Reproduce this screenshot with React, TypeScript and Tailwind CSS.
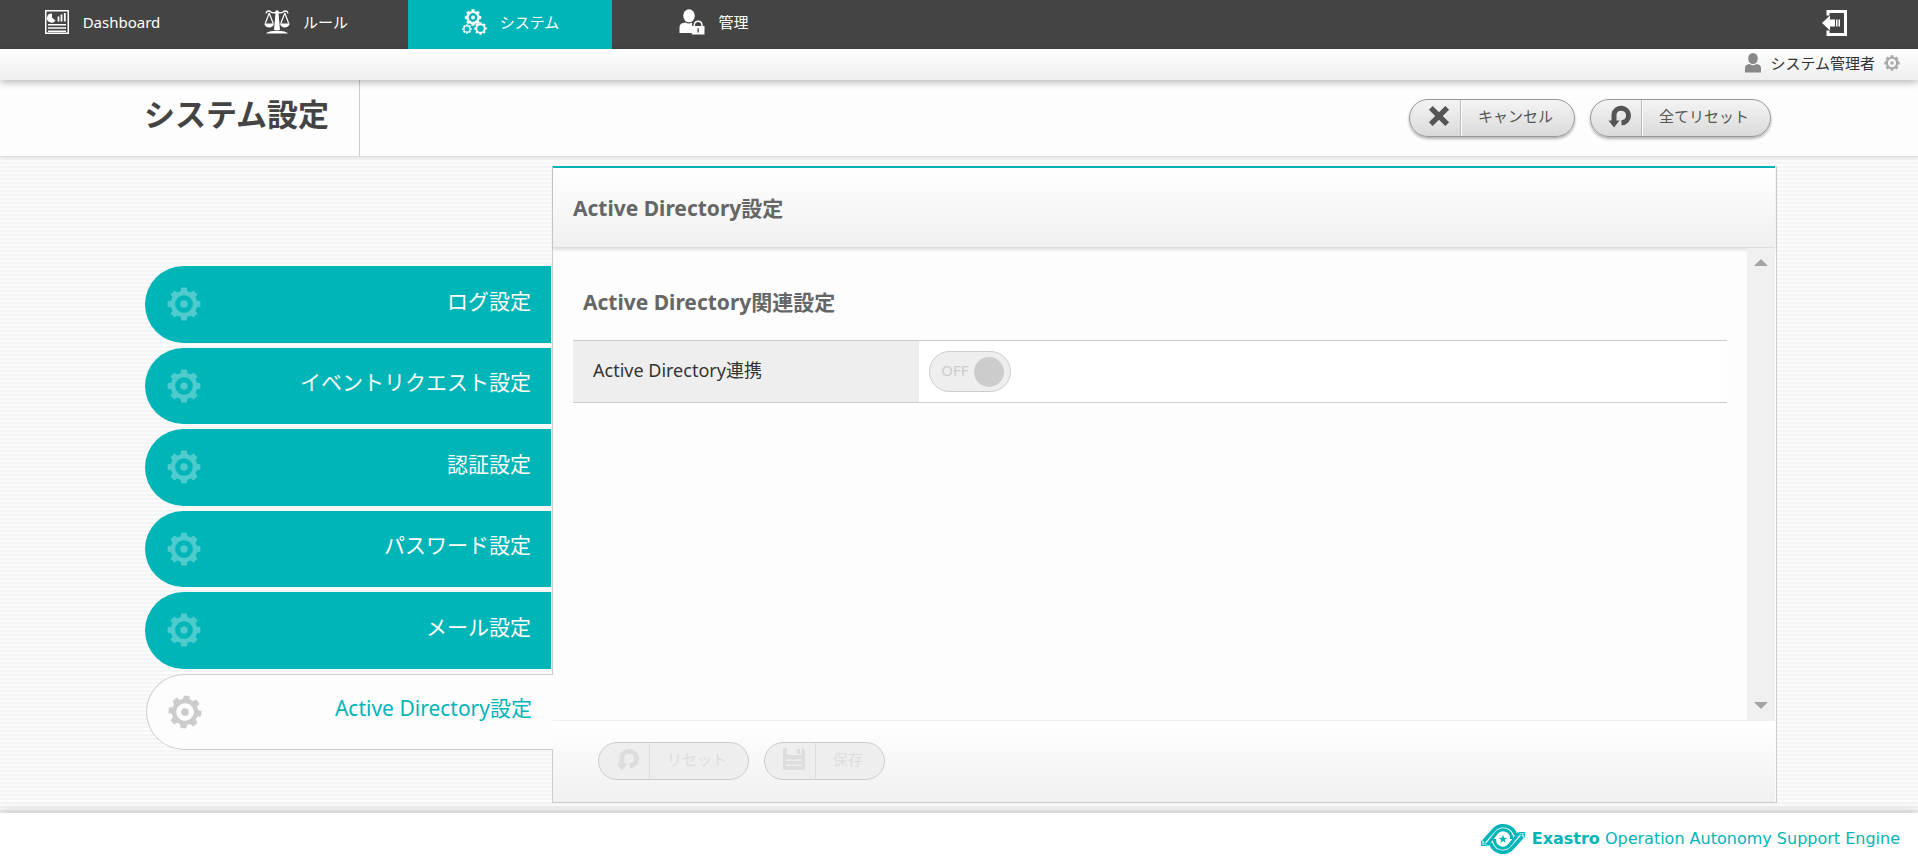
import type { ReactNode } from "react";

type IconProps = { className?: string };

const TEETH = [0, 45, 90, 135, 180, 225, 270, 315];

function GearShape({ cx, cy, s = 1, hole = true }: { cx: number; cy: number; s?: number; hole?: boolean }) {
  return (
    <g transform={`translate(${cx} ${cy}) scale(${s})`}>
      <circle r="11" fill="none" stroke="currentColor" strokeWidth="4.4" />
      {TEETH.map((a) => (
        <path key={a} d="M-3.6 -12 L-2.8 -16.4 H2.8 L3.6 -12 Z" transform={`rotate(${a})`} fill="currentColor" />
      ))}
      {hole && <circle r="3.8" fill="currentColor" />}
    </g>
  );
}

function GearIcon({ className }: IconProps) {
  return (
    <svg viewBox="-17 -17 34 34" className={className} aria-hidden="true">
      <GearShape cx={0} cy={0} />
    </svg>
  );
}

function DashboardIcon({ className }: IconProps) {
  return (
    <svg viewBox="0 0 26 26" className={className} aria-hidden="true" fill="none" stroke="currentColor">
      <rect x="1.75" y="1.75" width="22.5" height="22.5" strokeWidth="1.5" />
      <path d="M8 4.500V8.500L11.500 11.500A4.600 4.600 0 1 1 8 4.500Z" fill="currentColor" stroke="none" />
      <path d="M14.500 12.500V7.500M17.500 12.500V5.500M20.800 12.500V4" strokeWidth="1.8" />
      <path d="M4 15.750H22M4 19H22M4 22.250H22" strokeWidth="1.500" />
    </svg>
  );
}

function ScalesIcon({ className }: IconProps) {
  return (
    <svg viewBox="0 0 26 26" className={className} aria-hidden="true" fill="none" stroke="currentColor">
      <path d="M2 4.500C2.500 1.500 5.500 1.500 7 3C9 4.500 11 3.500 13 3.500S17 4.500 19 3C20.500 1.500 23.500 1.500 24 4.500" strokeWidth="1.400" />
      <circle cx="13" cy="3.200" r="2" fill="currentColor" stroke="none" />
      <path d="M5.200 4L1.300 14.500M5.200 4L9.200 14.500M20.800 4L16.800 14.500M20.800 4L24.700 14.500" strokeWidth="1.200" />
      <path d="M0.300 14.500H10C9.500 19.800 1 19.800 0.300 14.500ZM16 14.500H25.700C25 19.800 16.500 19.800 16 14.500Z" fill="currentColor" stroke="none" />
      <path d="M11.500 4H14.500L16 21H10Z" fill="currentColor" stroke="none" />
      <path d="M2 24.500C5 21.500 9 22.500 13 21.500C17 22.500 21 21.500 24 24.500Z" fill="currentColor" stroke="none" />
    </svg>
  );
}

function GearsIcon({ className }: IconProps) {
  return (
    <svg viewBox="0 0 26 26" className={className} aria-hidden="true">
      <GearShape cx={12} cy={8.500} s={0.500} />
      <GearShape cx={6} cy={20} s={0.290} hole={false} />
      <GearShape cx={19.500} cy={19.500} s={0.380} hole={false} />
    </svg>
  );
}

function UserLockIcon({ className }: IconProps) {
  return (
    <svg viewBox="0 0 26 26" className={className} aria-hidden="true">
      <ellipse cx="10" cy="6.800" rx="5.800" ry="6.500" fill="currentColor" />
      <path d="M0.500 24V19C0.500 15 3 13.800 6.500 13.500Q10 15.500 13 13.500L13.500 24Z" fill="currentColor" />
      <rect x="12.800" y="17" width="12.700" height="8.500" fill="currentColor" />
      <path d="M15.300 18V15.500A3.900 3.900 0 0 1 23 15.500V18" fill="none" stroke="currentColor" strokeWidth="1.500" />
      <path d="M19.200 19.300V23.500" stroke="#444" strokeWidth="1.300" />
    </svg>
  );
}

function LogoutIcon({ className }: IconProps) {
  return (
    <svg viewBox="0 0 26 28" className={className} aria-hidden="true">
      <path d="M6 6.500V2.500H23.500V25.500H6V21.500" fill="none" stroke="currentColor" strokeWidth="3" />
      <path d="M0 14L8 6.500V10.500H13V17.500H8V21.500ZM14 10.500H15.500V17.500H14ZM16.500 10.500H18V17.500H16.500Z" fill="currentColor" />
    </svg>
  );
}

function UserIcon({ className }: IconProps) {
  return (
    <svg viewBox="0 0 16 20" className={className} aria-hidden="true" fill="currentColor">
      <ellipse cx="8" cy="5.500" rx="4.800" ry="5.500" />
      <path d="M0 19.500V15Q0 11.500 4.500 11Q8 13.500 11.500 11Q16 11.500 16 15V19.500Z" />
    </svg>
  );
}

function CrossIcon({ className }: IconProps) {
  return (
    <svg viewBox="0 0 24 24" className={className} aria-hidden="true">
      <path d="M3.800 3.800L20.200 20.200M20.200 3.800L3.800 20.200" stroke="currentColor" strokeWidth="5.400" />
    </svg>
  );
}

function ResetIcon({ className }: IconProps) {
  return (
    <svg viewBox="0 0 24 24" className={className} aria-hidden="true">
      <path d="M6 18V10.500A7.300 7.300 0 1 1 13.500 18.800" fill="none" stroke="currentColor" strokeWidth="5" />
      <path d="M0.500 16.500H11.500L6 23.500Z" fill="currentColor" />
    </svg>
  );
}

function SaveIcon({ className }: IconProps) {
  return (
    <svg viewBox="0 0 24 24" className={className} aria-hidden="true">
      <path
        fillRule="evenodd"
        fill="currentColor"
        d="M1.500 1H5V8H19.500V1H21L23 3.500V21.500Q23 23 21.500 23H2.500Q1 23 1 21.500V2ZM4 12.500V14H11V12.500ZM12 12.500V14H20V12.500ZM4 17.500V19H20V17.500Z"
      />
      <path d="M15 2H18V7H15Z" fill="currentColor" />
    </svg>
  );
}

function LogoBand() {
  return (
    <g fill="none" stroke="currentColor">
      <path d="M2.500 17.500L12.500 6.300A12.800 12.800 0 0 1 34.500 11" strokeWidth="3.600" />
      <path d="M6 21L15 9.500A8.600 8.600 0 0 1 30.600 15" strokeWidth="3.200" />
      <path d="M0.700 16.500V21.300H6" strokeWidth="1.200" />
      <path d="M3.800 18V21.500M0.700 19.300H5.500" strokeWidth="0.800" />
    </g>
  );
}

function ExastroLogo({ className }: IconProps) {
  return (
    <svg viewBox="0 0 44 30" className={className} aria-hidden="true">
      <LogoBand />
      <g transform="rotate(180 22 15)">
        <LogoBand />
      </g>
      <path d="M22 10.800L23.100 13.800L26.200 13.900L23.700 15.800L24.600 18.900L22 17.100L19.400 18.900L20.300 15.800L17.800 13.900L20.900 13.800Z" fill="currentColor" />
    </svg>
  );
}

const NAV = [
  { label: "Dashboard", Icon: DashboardIcon, active: false },
  { label: "ルール", Icon: ScalesIcon, active: false },
  { label: "システム", Icon: GearsIcon, active: true },
  { label: "管理", Icon: UserLockIcon, active: false },
];

const TABS = ["ログ設定", "イベントリクエスト設定", "認証設定", "パスワード設定", "メール設定"];

function PillButton({ icon, children, disabled = false }: { icon: ReactNode; children: ReactNode; disabled?: boolean }) {
  return (
    <button
      type="button"
      disabled={disabled}
      className={
        disabled
          ? "flex h-[38px] items-stretch rounded-full border border-[#ccc] bg-[#eee] text-[#ddd]"
          : "flex h-[38px] items-stretch rounded-full border border-[#999] bg-linear-to-b from-[#f4f4f4] to-[#dadada] text-[#555] shadow-[0_2px_3px_rgba(0,0,0,0.3)]"
      }
    >
      <span
        className={
          disabled
            ? "flex w-[51px] items-center justify-end border-r border-[#ddd] pr-[9px]"
            : "flex w-[51px] items-center justify-end border-r border-[#bbb] pr-[9px] shadow-[1px_0_0_#fff]"
        }
      >
        {icon}
      </span>
      <span className="pr-[21px] pl-[17px] text-[15px] leading-8">{children}</span>
    </button>
  );
}

export default function App() {
  return (
    <div className="flex min-h-screen flex-col bg-[repeating-linear-gradient(to_bottom,#fcfcfc_0px,#fcfcfc_2px,#f5f5f5_2px,#f5f5f5_4px)] font-['Noto_Sans','Noto_Sans_CJK_JP',sans-serif] text-[#333]">
      <header className="relative z-20">
        <nav className="flex h-[49px] items-stretch justify-between bg-[#444] text-white">
          <ul className="flex">
            {NAV.map(({ label, Icon, active }) => (
              <li key={label} className={active ? "w-[204px] bg-[#00b5b8]" : "w-[204px]"}>
                <a href="#" className="flex h-11 items-center justify-center gap-[13px] text-[15px]">
                  <Icon className="size-[26px]" />
                  {label}
                </a>
              </li>
            ))}
          </ul>
          <button type="button" aria-label="ログアウト" className="mr-[70px] flex h-[45px] items-center">
            <LogoutIcon className="h-7 w-[26px]" />
          </button>
        </nav>
        <div className="flex h-[31px] items-center justify-end gap-[9px] bg-linear-to-b from-white to-[#eee] pr-[18px] pb-[3px] shadow-[0_2px_8px_rgba(0,0,0,0.3)]">
          <UserIcon className="h-5 w-4 text-[#888]" />
          <span className="text-[15px] leading-7">システム管理者</span>
          <a href="#" aria-label="ユーザー設定">
            <GearIcon className="size-4 text-[#aaa]" />
          </a>
        </div>
      </header>

      <div className="flex h-[77px] items-stretch border-b border-[#ddd] bg-white/80 shadow-[0_1px_4px_rgba(0,0,0,0.1)]">
        <h1 className="w-[360px] border-r border-[#ccc] pl-[144px] text-[31px] leading-[68px] font-bold whitespace-nowrap text-[#444]">
          システム設定
        </h1>
        <div className="flex flex-1 items-center justify-end gap-[15px] pr-[147px]">
          <PillButton icon={<CrossIcon className="mb-1 size-6" />}>キャンセル</PillButton>
          <PillButton icon={<ResetIcon className="mb-1 size-6" />}>全てリセット</PillButton>
        </div>
      </div>

      <main className="flex flex-1 pt-[9px] pr-[141px] pb-[10px] pl-[145px]">
        <div className="flex w-[407px] flex-col pt-[100px] pb-[53px]">
          <ul className="grid flex-1 auto-rows-fr gap-[5px] text-[21px]">
            {TABS.map((tab) => (
              <li key={tab} className="mr-px">
                <a
                  href="#"
                  className="flex h-full items-center justify-between rounded-l-full bg-[#00b5b8] pr-5 pl-[22px] text-white"
                >
                  <GearIcon className="size-[34px] opacity-30" />
                  <span className="pb-[6px]">{tab}</span>
                </a>
              </li>
            ))}
            <li className="relative z-10 -mr-px">
              <a
                href="#"
                aria-current="page"
                className="ml-px flex h-full items-center justify-between rounded-l-full border border-r-0 border-[#ccc] bg-[#fdfdfd] pr-[21px] pl-[21px] text-[#00b5b8]"
              >
                <GearIcon className="size-[34px] rotate-6 text-[#ccc]" />
                <span className="pb-[6px]">Active Directory設定</span>
              </a>
            </li>
          </ul>
        </div>

        <section className="flex flex-1 flex-col border-x border-b border-[#ccc] bg-[#fdfdfd] pr-px">
          <div className="relative z-10 h-[82px] border-t-2 border-b border-t-[#00b5b8] border-b-[#ddd] bg-linear-to-b from-white to-[#f0f0f0] px-5 shadow-[0_2px_3px_rgba(0,0,0,0.12)]">
            <h2 className="text-[21px] leading-[80px] font-bold text-[#666]">Active Directory設定</h2>
          </div>
          <div className="flex flex-1">
            <div className="flex-1 px-5 pt-[34px]">
              <h3 className="px-[10px] pb-[18px] text-[21px] leading-10 font-bold text-[#666]">Active Directory関連設定</h3>
              <table className="w-full border-separate border-spacing-0 border-y border-[#ccc]">
                <tbody>
                  <tr>
                    <th scope="row" className="w-[30%] bg-[#eee] px-5 pb-1 text-left text-lg font-normal">
                      Active Directory連携
                    </th>
                    <td className="h-[61px] bg-white px-[10px]">
                      <button
                        type="button"
                        role="switch"
                        aria-checked="false"
                        aria-label="Active Directory連携"
                        disabled
                        className="flex h-[41px] w-[82px] items-center justify-between rounded-full border border-[#ccc] bg-[#eee] pr-[6px] pl-[11px] text-[15px] text-[#ccc]"
                      >
                        <span className="pb-[3px]">OFF</span>
                        <span className="size-[30px] rounded-full bg-[#ccc]" />
                      </button>
                    </td>
                  </tr>
                </tbody>
              </table>
            </div>
            <div className="relative z-10 flex w-7 flex-col items-center justify-between bg-[#f0f0f0] py-[11px] text-[#a3a3a3]">
              <svg viewBox="0 0 14 7" className="h-[7px] w-[14px]" aria-hidden="true">
                <path d="M7 0L14 7H0Z" fill="currentColor" />
              </svg>
              <svg viewBox="0 0 14 7" className="h-[7px] w-[14px]" aria-hidden="true">
                <path d="M0 0H14L7 7Z" fill="currentColor" />
              </svg>
            </div>
          </div>
          <div className="flex h-[82px] items-center gap-[15px] border-t border-[#eee] bg-linear-to-b from-white to-[#f0f0f0] px-[45px] pb-[2px]">
            <PillButton disabled icon={<ResetIcon className="mb-1 size-6" />}>
              リセット
            </PillButton>
            <PillButton disabled icon={<SaveIcon className="mb-1 size-6" />}>
              保存
            </PillButton>
          </div>
        </section>
      </main>

      <footer className="flex h-[49px] items-center justify-end gap-[7px] bg-white pt-[3px] pr-[18px] text-[#00b5b8] shadow-[0_0_10px_rgba(0,0,0,0.3)]">
        <ExastroLogo className="h-[30px] w-11" />
        <p className="font-['DejaVu_Sans',sans-serif] text-base">
          <b>Exastro</b> Operation Autonomy Support Engine
        </p>
      </footer>
    </div>
  );
}
